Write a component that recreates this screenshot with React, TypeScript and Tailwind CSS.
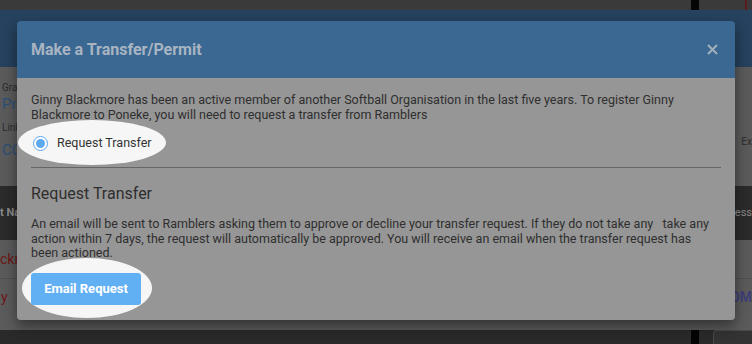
import React from 'react';

const paragraphOne =
    'Ginny Blackmore has been an active member of another Softball Organisation in the last five years. To register Ginny Blackmore to Poneke, you will need to request a transfer from Ramblers';

const paragraphTwo =
    'An email will be sent to Ramblers asking them to approve or decline your transfer request. If they do not take any \u00a0 take any action within 7 days, the request will automatically be approved. You will receive an email when the transfer request has been actioned.';

const BackgroundPage: React.FC = () => (
    <div className="flex flex-col w-full h-full">
        <div className="h-[10px] bg-[#3a3a3a] flex">
            <div className="ml-[691px] w-[8px] h-full bg-[#050505]" />
            <div className="ml-[46px] w-[2px] h-full bg-[#5a1c1c]" />
        </div>
        <div className="h-[57px] bg-[#26425e]" />
        <div className="h-[119px] bg-[#5b5b5b] flex justify-between">
            <div className="flex flex-col pl-[2px] pt-[14px]">
                <span className="text-[10px] leading-[14px] text-[#2c2c2c]">Gra</span>
                <span className="text-[15px] leading-[18px] text-[#2b4f78]">Pre</span>
                <span className="mt-[8px] text-[10px] leading-[14px] text-[#2c2c2c]">Link</span>
                <span className="mt-[6px] text-[15px] leading-[18px] text-[#2b4f78]">CO</span>
            </div>
            <div className="pt-[61px]">
                <span className="text-[10px] leading-[14px] text-[#2c2c2c]">Ex</span>
            </div>
        </div>
        <div className="h-[54px] bg-[#2b2b2b] flex justify-between items-center">
            <span className="text-[11px] font-bold text-[#8a8a8a]">t Na</span>
            <span className="text-[11px] text-[#8a8a8a]">ess</span>
        </div>
        <div className="h-[90px] bg-[#5b5b5b] flex justify-between">
            <div className="flex flex-col w-[17px]">
                <span className="mt-[11px] text-[14px] leading-[16px] text-[#6e1616]">ckr</span>
                <div className="mt-[11px] h-px bg-[#4f4f4f] w-full" />
                <span className="mt-[10px] text-[14px] leading-[16px] text-[#6e1616] pl-[1px]">y</span>
            </div>
            <div className="flex flex-col w-[17px] items-end">
                <div className="mt-[38px] h-px bg-[#4f4f4f] w-full" />
                <span className="mt-[10px] text-[14px] font-bold leading-[16px] text-[#3f3f78]">DM</span>
            </div>
        </div>
        <div className="flex-1 bg-[#2a2a2a] flex">
            <div className="ml-[691px] w-[8px] h-full bg-[#050505]" />
            <div className="ml-[14px] flex-1 h-full bg-[#333333] border-l border-t border-[#4a4a4a] rounded-tl-[4px]" />
        </div>
    </div>
);

const CloseIcon: React.FC = () => (
    <svg width="11" height="11" viewBox="0 0 11 11" fill="none">
        <path d="M1 1L10 10M10 1L1 10" stroke="#a2afbd" strokeWidth="2" />
    </svg>
);

const TransferModal: React.FC = () => (
    <div className="absolute left-[17px] top-[21px] w-[718px] rounded-[4px] shadow-[0_6px_14px_rgba(0,0,0,0.45)]">
        <div className="h-[57px] bg-[#3a6893] rounded-t-[4px] flex items-center justify-between pl-[14px] pr-[17px]">
            <h2 className="text-[16px] font-bold text-[#a8b4c1] leading-none">Make a Transfer/Permit</h2>
            <CloseIcon />
        </div>
        <div className="bg-[#969696] rounded-b-[4px] pl-[14px] pr-[14px] pt-[14px] pb-[15px] text-[#2f2f2f]">
            <p className="text-[12.5px] leading-[15px]">{paragraphOne}</p>

            <div className="relative mt-[11px] h-[20px] flex items-center">
                <div className="absolute -left-[13px] -top-[13px] w-[148px] h-[45px] rounded-[50%] bg-[#f6f6f6]" />
                <div className="relative flex items-center gap-[9px]">
                    <span className="ml-[2px] w-[15px] h-[15px] rounded-full border-[1.5px] border-[#5aa6ee] bg-white flex items-center justify-center">
                        <span className="w-[9px] h-[9px] rounded-full bg-[#5eaaf0]" />
                    </span>
                    <span className="text-[12.5px] text-[#333333]">Request Transfer</span>
                </div>
            </div>

            <div className="mt-[14px] h-px bg-[#666666]" />

            <h3 className="mt-[16px] text-[16px] leading-[20px] text-[#2e2e2e]">Request Transfer</h3>

            <p className="mt-[13px] text-[12.5px] leading-[14.5px]">{paragraphTwo}</p>

            <div className="relative mt-[12px] w-[110px] h-[32px]">
                <div className="absolute -left-[9px] -top-[15px] w-[130px] h-[60px] rounded-[50%] bg-[#f6f6f6]" />
                <button className="relative w-full h-full rounded-[3px] bg-[#62b0f4] text-white text-[13px] font-bold">
                    Email Request
                </button>
            </div>
        </div>
    </div>
);

export default function App() {
    return (
        <div className="relative w-[752px] h-[344px] overflow-hidden font-['Roboto',sans-serif]">
            <BackgroundPage />
            <TransferModal />
        </div>
    );
}
